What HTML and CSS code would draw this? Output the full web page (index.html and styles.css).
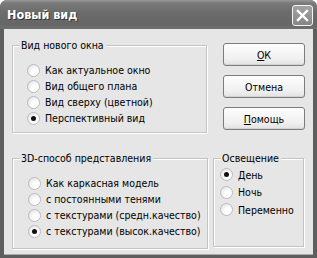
FILE: index.html
```html
<!DOCTYPE html>
<html lang="ru">
<head>
    <meta charset="UTF-8">
    <title>Новый вид</title>
    <link rel="stylesheet" href="styles.css">
</head>
<body>

    <div class="window">
        <!-- Заголовок окна -->
        <div class="titlebar">
            <span class="title">Новый вид</span>
            <span class="close">
                <svg width="13" height="13" viewBox="0 0 13 13">
                    <path d="M2 2 L11 11 M11 2 L2 11" stroke="#fff" stroke-width="2.4" stroke-linecap="square"/>
                </svg>
            </span>
        </div>

        <div class="body">
            <div class="row">
                <!-- Вид нового окна -->
                <fieldset class="group group-view">
                    <legend>Вид нового окна</legend>
                    <ul class="radios">
                        <li><span class="radio"></span>Как актуальное окно</li>
                        <li><span class="radio"></span>Вид общего плана</li>
                        <li><span class="radio"></span>Вид сверху (цветной)</li>
                        <li><span class="radio checked"></span>Перспективный вид</li>
                    </ul>
                </fieldset>

                <div class="buttons">
                    <button><u>О</u>К</button>
                    <button>Отмена</button>
                    <button><u>П</u>омощь</button>
                </div>
            </div>

            <div class="row">
                <!-- 3D-способ -->
                <fieldset class="group group-3d">
                    <legend>3D-способ представления</legend>
                    <ul class="radios">
                        <li><span class="radio"></span>Как каркасная модель</li>
                        <li><span class="radio"></span>с постоянными тенями</li>
                        <li><span class="radio"></span>с текстурами (средн.качество)</li>
                        <li><span class="radio checked"></span>с текстурами (высок.качество)</li>
                    </ul>
                </fieldset>

                <!-- Освещение -->
                <fieldset class="group group-light">
                    <legend>Освещение</legend>
                    <ul class="radios">
                        <li><span class="radio checked"></span>День</li>
                        <li><span class="radio"></span>Ночь</li>
                        <li><span class="radio"></span>Переменно</li>
                    </ul>
                </fieldset>
            </div>
        </div>
    </div>

</body>
</html>
```

FILE: styles.css
```css
body { margin: 0; background: #fff; font-family: "DejaVu Sans Condensed", "DejaVu Sans", sans-serif; font-stretch: condensed; font-size: 10.5px; color: #000; }

.window { width: 317px; height: 258px; box-sizing: border-box; display: flex; flex-direction: column; background: #5e5e5e; border-radius: 7px 7px 0 0; overflow: hidden; }

.titlebar { height: 29px; flex: none; display: flex; align-items: center; justify-content: space-between; padding: 0 4px 0 7px; background: linear-gradient(#9a9a9a 0, #7a7a7a 3px, #6c6c6c 12px, #666 24px, #707070 29px); }
.title { color: #fff; font-weight: bold; font-size: 12.5px; text-shadow: 1px 1px 0 #333; }
.close { width: 21px; height: 21px; box-sizing: border-box; display: flex; align-items: center; justify-content: center; border: 1px solid #f4f4f4; border-radius: 3px; background: linear-gradient(#a2a2a2, #868686); margin-top: 2px; }

.body { flex: 1; margin: 0 4px 3px 4px; background: #e6e6e6; padding: 10px 0 0 8px; border-bottom: 1px solid #aaa; }

.row { display: flex; align-items: flex-start; }
.row + .row { margin-top: 19px; }

.group { margin: 0; padding: 0; border: 1px solid #c4c4c4; box-shadow: 1px 1px 0 #fff, inset 1px 1px 0 #fff; box-sizing: border-box; }
.group legend { margin-left: 7px; padding: 0 2px 0 1px; line-height: 13px; background: #e6e6e6; white-space: nowrap; }

.group-view { width: 195px; height: 94px; }
.group-3d { width: 196px; height: 97px; }
.group-light { width: 91px; height: 95px; margin-left: 5px; }

.radios { list-style: none; margin: 0; padding: 0; }
.radios li { display: flex; align-items: center; height: 16px; white-space: nowrap; }
.group-view .radios { padding: 10px 0 0 14px; }
.group-3d .radios { padding: 10px 0 0 15px; }
.group-light .radios { padding: 1px 0 0 6px; }
.group-light .radios li { height: 17.5px; }

.radio { flex: none; width: 13px; height: 13px; box-sizing: border-box; border-radius: 50%; border: 1px solid #bcbcbc; background: radial-gradient(circle at 65% 65%, #fff 30%, #e8e8e8 75%, #cccccc 100%); margin-right: 5px; display: flex; align-items: center; justify-content: center; }
.radio.checked::after { content: ""; width: 5px; height: 5px; border-radius: 50%; background: #111; }

.buttons { display: flex; flex-direction: column; gap: 9px; margin: 4px 0 0 16px; }
.buttons button { width: 82px; height: 23px; font-family: inherit; font-stretch: condensed; font-size: 10.5px; color: #000; padding: 0; border: 1px solid #7c7c7c; border-radius: 3px; background: linear-gradient(#fdfdfd, #f0f0f0 70%, #e2e2e2); box-shadow: inset 0 -1px 0 #d2d2d2; }
.buttons u { text-decoration: underline; }
```
